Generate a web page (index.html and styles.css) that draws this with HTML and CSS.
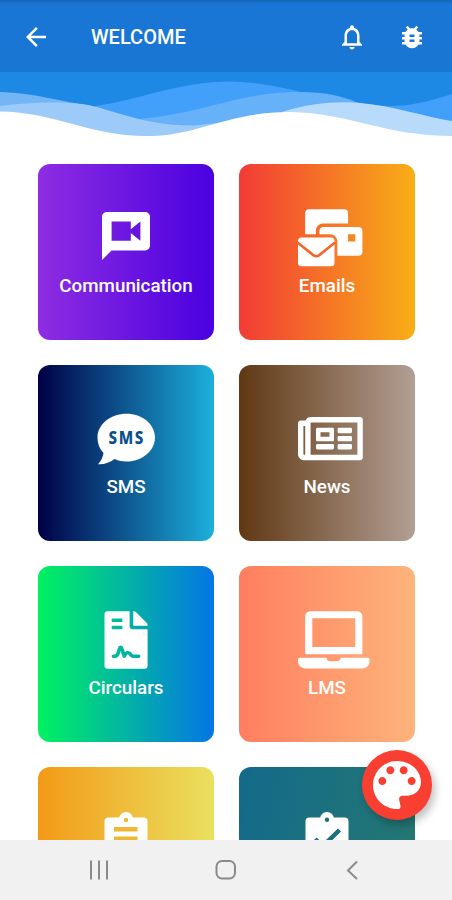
FILE: index.html
```
<!DOCTYPE html>
<html lang="en">
<head>
<meta charset="UTF-8" />
<meta name="viewport" content="width=device-width, initial-scale=1" />
<title>Welcome</title>
<link rel="stylesheet" href="styles.css">
</head>
<body>
<div class="app">
  <header class="appbar">
    <button class="icon-btn" aria-label="Back">
      <svg viewBox="0 0 24 24"><path d="M20 11H7.83l5.59-5.59L12 4l-8 8 8 8 1.41-1.41L7.83 13H20v-2z"/></svg>
    </button>
    <h1>WELCOME</h1>
    <button class="icon-btn" aria-label="Notifications">
      <svg viewBox="0 0 24 24"><path d="M12 22c1.1 0 2-.9 2-2h-4c0 1.1.89 2 2 2zm6-6v-5c0-3.07-1.64-5.64-4.5-6.32V4c0-.83-.67-1.5-1.5-1.5s-1.5.67-1.5 1.5v.68C7.63 5.36 6 7.92 6 11v5l-2 2v1h16v-1l-2-2zm-2 1H8v-6c0-2.48 1.51-4.5 4-4.5s4 2.02 4 4.5v6z"/></svg>
    </button>
    <button class="icon-btn" aria-label="Report a bug">
      <svg viewBox="0 0 24 24"><path d="M20 8h-2.81c-.45-.78-1.07-1.45-1.82-1.96L17 4.41 15.59 3l-2.17 2.17C12.96 5.06 12.49 5 12 5c-.49 0-.96.06-1.41.17L8.41 3 7 4.41l1.62 1.63C7.88 6.55 7.26 7.22 6.81 8H4v2h2.09c-.05.33-.09.66-.09 1v1H4v2h2v1c0 .34.04.67.09 1H4v2h2.81c1.04 1.79 2.97 3 5.19 3s4.15-1.21 5.19-3H20v-2h-2.09c.05-.33.09-.66.09-1v-1h2v-2h-2v-1c0-.34-.04-.67-.09-1H20V8zm-6 8h-4v-2h4v2zm0-4h-4v-2h4v2z"/></svg>
    </button>
  </header>

  <main class="content">
    <svg class="waves" viewBox="0 0 452 68" aria-hidden="true">
      <rect width="452" height="50" fill="#1e88e5"/>
      <path fill="#42a0fa" d="M95 34C140 28 180 9 232 9.500C290 11 330 34 392 34C420 33 435 27 452 22V66H95z"/>
      <path fill="#66b1f7" d="M115 48C200 46 230 20 300 20C325 20 342 24 356 30L452 52V66H115z"/>
      <path fill="#74b6f5" d="M0 20C36 21 62 30 92 34L60 60H0z"/>
      <path fill="#9ccbf9" d="M0 34C28 31 50 29 82 32C115 37 140 54 195 53.500L226 50V66H0z"/>
      <path fill="#b9dbfb" d="M282 40C310 31 338 29 360 31C395 34 425 45 452 49V66H282z"/>
      <path fill="#fff" d="M0 39.500C55 40 90 64 146 64C200 64 225 40 290 40C350 41 385 64 452 64V68H0z"/>
    </svg>

    <div class="grid">
      <a class="card communication">
        <svg class="card-icon" viewBox="0 0 80 58"><g transform="translate(11.200 .2) scale(2.400)"><path d="M20 2H4c-1.100 0-1.990.9-1.990 2L2 22l4-4h14c1.100 0 2-.9 2-2V4c0-1.100-.9-2-2-2zm-2 12l-4-3.200V14H6V6h8v3.200L18 6v8z"/></g></svg>
        <span>Communication</span>
      </a>
      <a class="card emails">
        <svg class="card-icon" viewBox="0 0 80 58">
          <g transform="translate(11 2.200) scale(.1118)"><path d="M544 160H224c-17.670 0-32 14.330-32 32v32h96c33.210 0 60.590 25.420 63.710 57.820l.29-.22V416h192c17.670 0 32-14.330 32-32V192c0-17.670-14.330-32-32-32zm-32 128h-64v-64h64v64zm-352-96c0-35.290 28.710-64 64-64h224V32c0-17.670-14.330-32-32-32H96C78.330 0 64 14.330 64 32v192h96v-32z"/></g>
          <rect x="11" y="30.500" width="36.500" height="28.700" rx="3.500"/>
          <path class="flap" d="M10.500 35.500L26.500 48.300Q29.300 50 32 48.300L48 35.500"/>
        </svg>
        <span>Emails</span>
      </a>
      <a class="card sms">
        <svg class="card-icon" viewBox="0 0 80 58">
          <path d="M40.500 5.700C56 5.700 69 16 69 29.500S56 53.500 40.500 53.500C36 53.500 32 52.700 28.500 51C24 54.500 18 56.800 12 56.300C15 53 17 49 17.500 45C13.500 41 11.500 35.500 11.500 29.500C11.500 16 25 5.700 40.500 5.700z"/>
          <text class="bubble-text" x="22.500" y="36" textLength="36.500" lengthAdjust="spacingAndGlyphs">SMS</text>
        </svg>
        <span>SMS</span>
      </a>
      <a class="card news">
        <svg class="card-icon" viewBox="0 0 80 58"><g transform="translate(11 1.800) scale(.1125)"><path d="M552 64H112c-20.858 0-38.643 13.377-45.248 32H24c-13.255 0-24 10.745-24 24v272c0 30.928 25.072 56 56 56h496c13.255 0 24-10.745 24-24V88c0-13.255-10.745-24-24-24zM48 392V144h16v248c0 4.411-3.589 8-8 8s-8-3.589-8-8zm480 8H111.422c.374-2.614.578-5.283.578-8V112h416v288zM172 280h136c6.627 0 12-5.373 12-12v-96c0-6.627-5.373-12-12-12H172c-6.627 0-12 5.373-12 12v96c0 6.627 5.373 12 12 12zm28-80h80v40h-80v-40zm-40 140v-24c0-6.627 5.373-12 12-12h136c6.627 0 12 5.373 12 12v24c0 6.627-5.373 12-12 12H172c-6.627 0-12-5.373-12-12zm192 0v-24c0-6.627 5.373-12 12-12h104c6.627 0 12 5.373 12 12v24c0 6.627-5.373 12-12 12H364c-6.627 0-12-5.373-12-12zm0-144v-24c0-6.627 5.373-12 12-12h104c6.627 0 12 5.373 12 12v24c0 6.627-5.373 12-12 12H364c-6.627 0-12-5.373-12-12zm0 72v-24c0-6.627 5.373-12 12-12h104c6.627 0 12 5.373 12 12v24c0 6.627-5.373 12-12 12H364c-6.627 0-12-5.373-12-12z"/></g></svg>
        <span>News</span>
      </a>
      <a class="card circulars">
        <svg class="card-icon" viewBox="0 0 80 58"><g transform="translate(18.500 2.300) scale(.1122)"><path d="M224 136V0H24C10.700 0 0 10.700 0 24v464c0 13.300 10.700 24 24 24h336c13.300 0 24-10.700 24-24V160H248c-13.200 0-24-10.800-24-24zM64 72c0-4.420 3.580-8 8-8h80c4.420 0 8 3.580 8 8v16c0 4.420-3.580 8-8 8H72c-4.420 0-8-3.580-8-8V72zm0 64c0-4.420 3.580-8 8-8h80c4.420 0 8 3.580 8 8v16c0 4.420-3.580 8-8 8H72c-4.420 0-8-3.580-8-8v-16zm192.810 248H304c8.840 0 16 7.160 16 16s-7.160 16-16 16h-47.190c-16.450 0-31.270-9.140-38.640-23.860-2.950-5.920-8.090-6.520-10.170-6.520s-7.220.59-10.020 6.190l-7.670 15.340a15.986 15.986 0 0 1-14.310 8.840c-.38 0-.75-.02-1.140-.05-6.450-.45-12-4.750-14.030-10.890L144 354.590l-10.610 31.880c-5.890 17.660-22.380 29.530-41 29.530H80c-8.840 0-16-7.160-16-16s7.160-16 16-16h12.390c4.830 0 9.110-3.080 10.640-7.660l18.190-54.640c3.300-9.810 12.440-16.410 22.780-16.410s19.480 6.590 22.770 16.410l13.880 41.640c19.770-16.190 54.050-9.700 66 14.160 2.020 4.060 5.960 6.500 10.160 6.500zM377 105L279.100 7c-4.500-4.500-10.600-7-17-7H256v128h128v-6.100c0-6.300-2.500-12.400-7-16.900z"/></g></svg>
        <span>Circulars</span>
      </a>
      <a class="card lms">
        <svg class="card-icon" viewBox="0 0 80 58"><g transform="translate(11 2.200) scale(.1118)"><path d="M624 416H381.540c-.74 19.810-14.710 32-32.740 32H288c-18.690 0-33.020-17.470-32.770-32H16c-8.800 0-16 7.200-16 16v16c0 35.200 28.800 64 64 64h512c35.200 0 64-28.800 64-64v-16c0-8.800-7.200-16-16-16zM576 48c0-26.400-21.600-48-48-48H112C85.600 0 64 21.600 64 48v336h512V48zm-64 272H128V64h384v256z"/></g></svg>
        <span>LMS</span>
      </a>
      <a class="card list">
        <svg class="card-icon" viewBox="0 0 80 58">
          <rect x="18.500" y="7.500" width="43" height="50" rx="4"/>
          <circle cx="40" cy="9" r="7"/>
          <g fill="#eeb734">
            <circle cx="40" cy="10" r="2.200"/>
            <rect x="28" y="17" width="23.500" height="4.500"/>
            <rect x="28" y="26.500" width="23.500" height="4.500"/>
            <rect x="28" y="36" width="16" height="4.500"/>
          </g>
        </svg>
      </a>
      <a class="card tasks">
        <svg class="card-icon" viewBox="0 0 80 58">
          <rect x="18.500" y="7.500" width="43" height="50" rx="4"/>
          <circle cx="40" cy="9" r="7"/>
          <circle cx="40" cy="9.700" r="2.200" fill="#1d6f7d"/>
          <path d="M28 29l7.500 7.500L52.500 20" fill="none" stroke="#1d6f7d" stroke-width="4.500"/>
        </svg>
      </a>
    </div>

    <button class="fab" aria-label="Change theme">
      <svg viewBox="0 0 24 24"><path d="M12 3c-4.970 0-9 4.030-9 9s4.030 9 9 9h.4c.7 0 1-.6.9-1.200l-.5-2.300c-.1-.9.4-1.500 1.200-1.500h2c2.760 0 5-2.240 5-5 0-4.420-4.030-8-9-8zm-5.500 9c-.83 0-1.500-.67-1.500-1.500S5.670 9 6.500 9 8 9.670 8 10.500 7.330 12 6.500 12zm3-4C8.670 8 8 7.330 8 6.500S8.670 5 9.500 5s1.500.67 1.500 1.500S10.330 8 9.500 8zm5 0c-.83 0-1.500-.67-1.500-1.500S13.670 5 14.500 5s1.500.67 1.500 1.500S15.330 8 14.500 8zm3 4c-.83 0-1.500-.67-1.500-1.500S16.670 9 17.500 9s1.500.67 1.500 1.500-.67 1.500-1.500 1.500z"/></svg>
    </button>
  </main>

  <nav class="navbar">
    <svg viewBox="0 0 24 24"><path d="M4 2.500v19M12 2.500v19M20 2.500v19"/></svg>
    <svg viewBox="0 0 24 24"><rect x="2.500" y="3" width="18.500" height="17.500" rx="5.500"/></svg>
    <svg viewBox="0 0 24 24"><path d="M16 3.500L7 12.500l9 8.500"/></svg>
  </nav>
</div>
</body>
</html>
```
FILE: styles.css
```
* {
  box-sizing: border-box;
}
body {
  margin: 0;
  background: #fff;
  font-family: Roboto, "Liberation Sans", sans-serif;
  color: #fff;
}
button {
  border: none;
  padding: 0;
  background: none;
  cursor: pointer;
}
svg {
  display: block;
}
.app {
  display: flex;
  flex-direction: column;
  width: 452px;
  height: 900px;
  overflow: hidden;
}

/* Top bar */
.appbar {
  display: flex;
  align-items: center;
  height: 72px;
  padding: 2px 25px 0 21px;
  background: linear-gradient(#1565b4 0, #1976d6 4px, #1976d2 100%);
}
.appbar h1 {
  flex: 1;
  margin: 0 0 0 40px;
  font-size: 20px;
  font-weight: 500;
  line-height: 24px;
}
.icon-btn svg {
  width: 30px;
  height: 30px;
  fill: #fff;
}
.icon-btn + .icon-btn {
  margin-left: 30px;
}

/* Page content */
.content {
  position: relative;
  flex: 1;
  min-height: 0;
  overflow: hidden;
}
.waves {
  width: 452px;
  height: 68px;
}
.grid {
  display: grid;
  grid-template-columns: repeat(2, 176px);
  grid-auto-rows: 176px;
  gap: 25px;
  padding: 24px 0 0 38px;
}
.card {
  display: flex;
  flex-direction: column;
  align-items: center;
  padding-top: 43px;
  border-radius: 12px;
  font-size: 18.8px;
  font-weight: 500;
  line-height: 22px;
}
.card-icon {
  width: 80px;
  height: 58px;
  margin-bottom: 10px;
  overflow: visible;
  fill: #fff;
}
.flap {
  fill: none;
  stroke: #f1672b;
  stroke-width: 2.7;
}
.bubble-text {
  font-family: "Noto Sans", sans-serif;
  font-size: 18.5px;
  font-weight: 800;
  letter-spacing: 2px;
  fill: #0b4f8e;
}
.communication { background: linear-gradient(90deg, #8e2de2, #4a00e0); }
.emails { background: linear-gradient(90deg, #f23b36, #f8ae16); }
.sms { background: linear-gradient(90deg, #000046, #1cb0dc); }
.news { background: linear-gradient(90deg, #603813, #b29f94); }
.circulars { background: linear-gradient(90deg, #00f260, #0575e6); }
.lms { background: linear-gradient(90deg, #ff7e5f, #feb47b); }
.list { background: linear-gradient(90deg, #f39a17, #eae05f); }
.tasks { background: linear-gradient(100deg, #136a8a, #267871); }

.fab {
  position: absolute;
  right: 20px;
  bottom: 20px;
  display: flex;
  align-items: center;
  justify-content: center;
  width: 70px;
  height: 70px;
  border-radius: 50%;
  background: #f93e32;
  box-shadow: 3px 5px 9px rgba(0, 0, 0, 0.25);
}
.fab svg {
  width: 64px;
  height: 64px;
  fill: #fff;
}

/* System navigation */
.navbar {
  display: flex;
  justify-content: space-between;
  height: 60px;
  padding: 18px 87px 0;
  background: #f1f1f1;
}
.navbar svg {
  width: 24px;
  height: 24px;
  fill: none;
  stroke: #8a8a8a;
  stroke-width: 2;
}
```
